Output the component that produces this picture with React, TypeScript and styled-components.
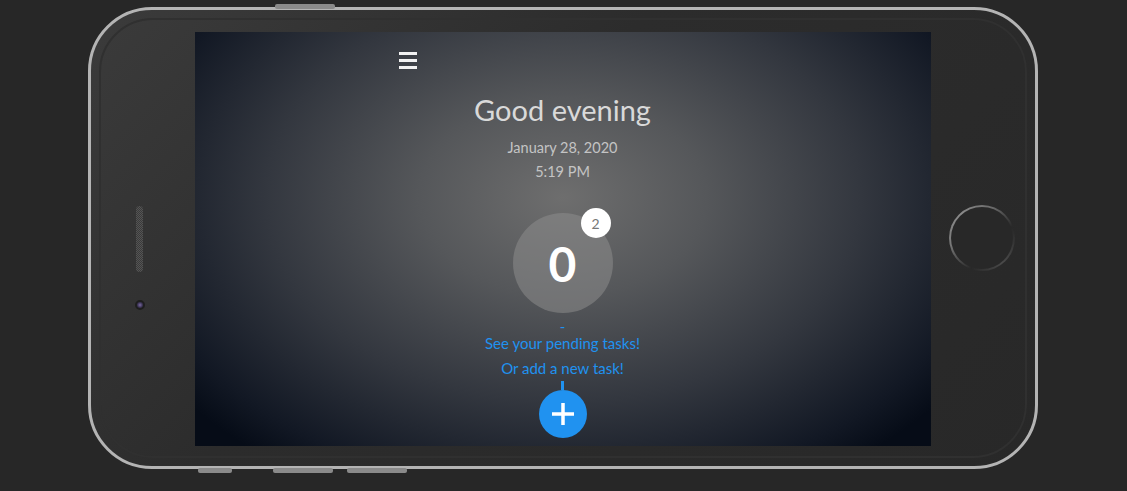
import styled, { createGlobalStyle } from "styled-components";

const GlobalStyle = createGlobalStyle`
    html, body {
        margin: 0;
        padding: 0;
        background: #272727;
        font-family: "Lato", "Noto Sans", sans-serif;
    }
    * {
        box-sizing: border-box;
    }
`;

const Page = styled.div`
    display: flex;
    justify-content: center;
    width: 1127px;
    height: 491px;
    padding-top: 7px;
    padding-right: 2px;
    overflow: hidden;
`;

const Phone = styled.div`
    position: relative;
    display: flex;
    width: 950px;
    height: 462px;
    border: 3px solid #b4b4b4;
    border-radius: 64px;
    background: linear-gradient(135deg, #3b3b3b 0%, #2c2c2c 40%, #282828 100%);
`;

const Bezel = styled.div`
    display: flex;
    align-items: stretch;
    flex: 1;
    margin: 8px;
    border: 2px solid #303030;
    border-radius: 54px;
`;

const SideButton = styled.div<{ $left: number; $width: number; $top: boolean }>`
    position: absolute;
    left: ${(p) => p.$left}px;
    width: ${(p) => p.$width}px;
    height: 5px;
    ${(p) => (p.$top ? "top: -6px;" : "bottom: -7px;")}
    background: #8a8a8a;
    border-radius: 2px;
`;

const LeftColumn = styled.div`
    display: flex;
    flex-direction: column;
    align-items: center;
    width: 94px;
    padding-top: 186px;
    padding-right: 16px;
`;

const Speaker = styled.div`
    width: 7px;
    height: 66px;
    border-radius: 4px;
    background: repeating-conic-gradient(#555 0% 25%, #3a3a3a 0% 50%) 0 0 / 2px 2px;
`;

const Camera = styled.div`
    width: 10px;
    height: 10px;
    margin-top: 28px;
    border-radius: 50%;
    border: 2px solid #1e1e1e;
    background: radial-gradient(circle, #7a6aa0 0%, #3e3658 55%, #26232f 100%);
`;

const Screen = styled.div`
    display: flex;
    flex-direction: column;
    align-items: center;
    width: 736px;
    height: 414px;
    margin-top: 12px;
    background: radial-gradient(
        ellipse 480px 330px at 50% 40%,
        #6e6e6e 0%,
        #55575a 30%,
        #33373f 62%,
        #121824 90%,
        #060c17 100%
    );
    color: #d6d6d6;
`;

const Header = styled.div`
    display: flex;
    width: 330px;
    padding-top: 20px;
    padding-left: 1px;
`;

const Burger = styled.div`
    display: flex;
    flex-direction: column;
    gap: 4px;
    width: 18px;
    > span {
        height: 3px;
        background: #f2f2f2;
    }
`;

const Title = styled.h1`
    margin: 21px 0 0;
    font-size: 29px;
    font-weight: 400;
    color: #d9d9d9;
    line-height: 40px;
`;

const Info = styled.div`
    margin-top: 6px;
    font-size: 14.5px;
    line-height: 24px;
    color: #c4c4c4;
    text-align: center;
`;

const Counter = styled.div`
    position: relative;
    display: flex;
    align-items: center;
    justify-content: center;
    width: 100px;
    height: 100px;
    margin-top: 29px;
    border-radius: 50%;
    background: rgba(140, 140, 140, 0.55);
    color: #ffffff;
    font-size: 48px;
    font-weight: 700;
`;

const Badge = styled.div`
    position: absolute;
    top: -5px;
    right: 2px;
    display: flex;
    align-items: center;
    justify-content: center;
    width: 30px;
    height: 30px;
    border-radius: 50%;
    background: #ffffff;
    color: #777777;
    font-size: 14px;
    font-weight: 400;
`;

const Links = styled.div`
    display: flex;
    flex-direction: column;
    align-items: center;
    margin-top: 8px;
    color: #2092f0;
    font-size: 15px;
    line-height: 25px;
    > span:first-child {
        line-height: 10px;
    }
`;

const Stem = styled.div`
    width: 3px;
    height: 9px;
    background: #2092f0;
`;

const AddButton = styled.div`
    display: flex;
    align-items: center;
    justify-content: center;
    width: 48px;
    height: 48px;
    border-radius: 50%;
    background: #2092f0;
`;

const RightColumn = styled.div`
    display: flex;
    flex: 1;
    align-items: center;
    justify-content: center;
    padding-left: 8px;
`;

const HomeButton = styled.div`
    width: 66px;
    height: 66px;
    border-radius: 50%;
    background:
        linear-gradient(#282828, #282828) padding-box,
        conic-gradient(from 200deg, #282828 0deg, #7a7a7a 60deg, #8a8a8a 120deg, #6a6a6a 180deg, #282828 230deg, #4a4a4a 300deg, #282828 360deg) border-box;
    border: 2px solid transparent;
`;

export default function App() {
    return (
        <>
            <GlobalStyle />
            <Page>
                <Phone>
                    <SideButton $top $left={184} $width={60} />
                    <SideButton $top={false} $left={107} $width={34} />
                    <SideButton $top={false} $left={182} $width={60} />
                    <SideButton $top={false} $left={256} $width={60} />
                    <Bezel>
                        <LeftColumn>
                            <Speaker />
                            <Camera />
                        </LeftColumn>
                        <Screen>
                            <Header>
                                <Burger>
                                    <span />
                                    <span />
                                    <span />
                                </Burger>
                            </Header>
                            <Title>Good evening</Title>
                            <Info>
                                January 28, 2020
                                <br />
                                5:19 PM
                            </Info>
                            <Counter>
                                0<Badge>2</Badge>
                            </Counter>
                            <Links>
                                <span>-</span>
                                <span>See your pending tasks!</span>
                                <span>Or add a new task!</span>
                            </Links>
                            <Stem />
                            <AddButton>
                                <svg width="26" height="26" viewBox="0 0 26 26">
                                    <path d="M13 2V24M2 13H24" stroke="#ffffff" strokeWidth="3.5" />
                                </svg>
                            </AddButton>
                        </Screen>
                        <RightColumn>
                            <HomeButton />
                        </RightColumn>
                    </Bezel>
                </Phone>
            </Page>
        </>
    );
}
